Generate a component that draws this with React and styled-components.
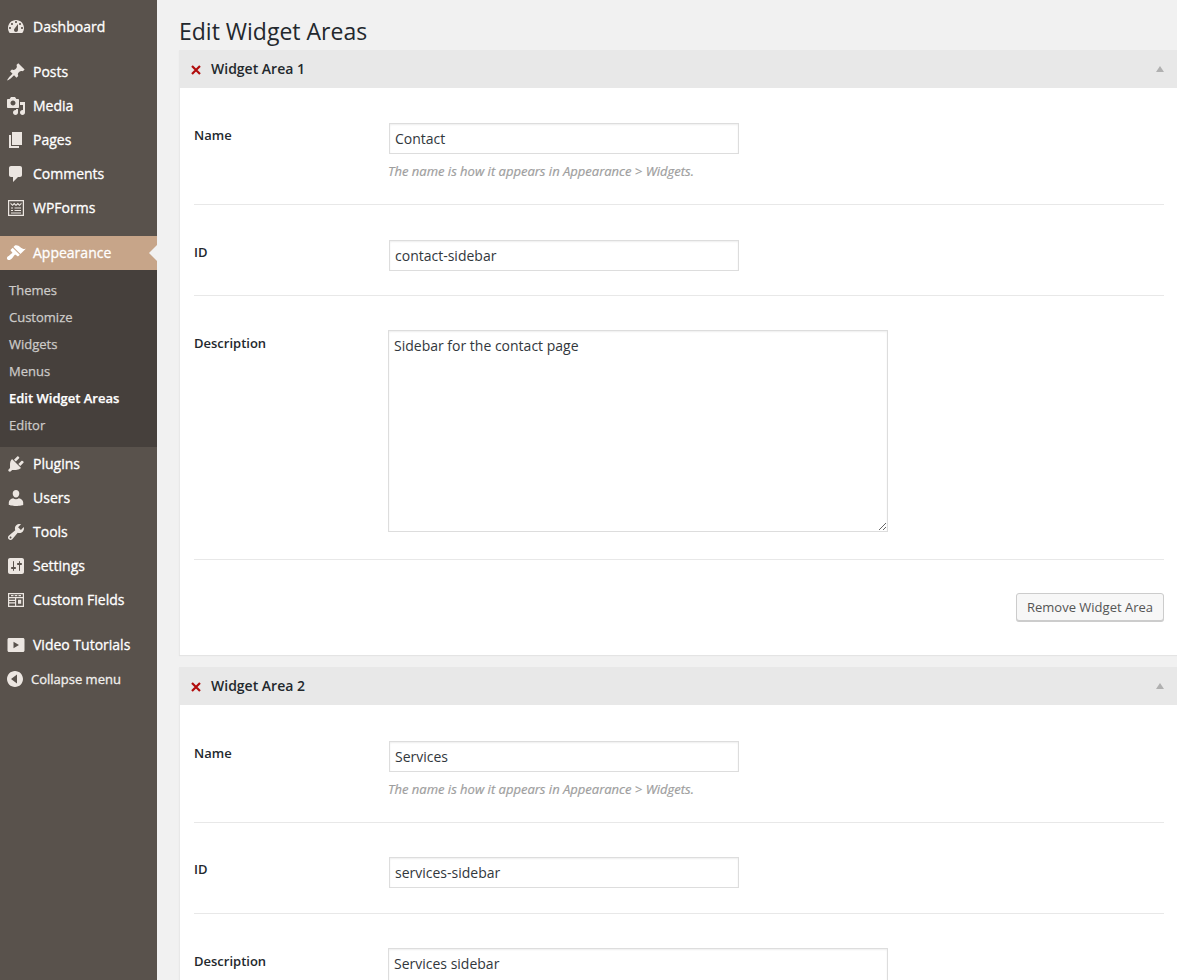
import React from 'react';
import styled, { createGlobalStyle } from 'styled-components';

const paths = {
    dashboard: 'M3.76 16h12.48c1.1-1.37 1.76-3.11 1.76-5 0-4.42-3.58-8-8-8s-8 3.58-8 8c0 1.89.66 3.63 1.76 5zM10 4c.55 0 1 .45 1 1s-.45 1-1 1-1-.45-1-1 .45-1 1-1zM6 6c.55 0 1 .45 1 1s-.45 1-1 1-1-.45-1-1 .45-1 1-1zm8 0c.55 0 1 .45 1 1s-.45 1-1 1-1-.45-1-1 .45-1 1-1zm-5.37 5.55L12 7v6c0 1.1-.9 2-2 2s-2-.9-2-2c0-.57.24-1.08.63-1.45zM4 10c.55 0 1 .45 1 1s-.45 1-1 1-1-.45-1-1 .45-1 1-1zm12 0c.55 0 1 .45 1 1s-.45 1-1 1-1-.45-1-1 .45-1 1-1z',
    posts: 'M10.44 3.02l1.82-1.82 6.36 6.35-1.83 1.82c-1.05-.68-2.48-.57-3.41.36l-.75.75c-.92.93-1.04 2.35-.35 3.41l-1.83 1.82-2.41-2.41-2.8 2.79c-.42.42-3.38 2.71-3.8 2.29s1.86-3.39 2.28-3.81l2.79-2.79L4.1 9.36l1.83-1.82c1.05.69 2.48.57 3.4-.36l.75-.75c.93-.92 1.05-2.35.36-3.41z',
    media: 'M13 11V4c0-.55-.45-1-1-1h-1.67L9 1H5L3.67 3H2c-.55 0-1 .45-1 1v7c0 .55.45 1 1 1h10c.55 0 1-.45 1-1zM7 4.5c1.38 0 2.5 1.12 2.5 2.5S8.38 9.5 7 9.5 4.5 8.38 4.5 7 5.62 4.5 7 4.5zM14 6h5v10.5c0 1.38-1.12 2.5-2.5 2.5S14 17.88 14 16.5s1.12-2.5 2.5-2.5c.17 0 .34.02.5.05V9h-3V6zm-4 8.05V13h2v3.5c0 1.38-1.12 2.5-2.5 2.5S7 17.88 7 16.5 8.12 14 9.5 14c.17 0 .34.02.5.05z',
    pages: 'M6 15V2h10v13H6zm-1 1h8v2H3V5h2v11z',
    comments: 'M5 2h9c1.1 0 2 .9 2 2v7c0 1.1-.9 2-2 2h-2l-5 5v-5H5c-1.1 0-2-.9-2-2V4c0-1.1.9-2 2-2z',
    wpforms: 'M2 2h16v16H2V2zm1.2 1.2v13.6h13.6V3.2H3.2zM4.5 4.5l2 2 1.7-1.7L10 6.5l1.8-1.7 1.7 1.7 2-2v1.6l-2 2-1.7-1.7L10 8.1 8.2 6.4 6.5 8.1l-2-2V4.500zM5 9.500h2v1.100H5V9.500zm3.500 0H15v1.100H8.500V9.500zM5 12h2v1.100H5V12zm3.500 0H15v1.100H8.500V12zM5 14.500h10v1H5v-1z',
    appearance: 'M14.48 11.06L7.41 3.99l1.5-1.5c.5-.56 2.3-.47 3.51.32 1.21.8 1.43 1.28 2.91 2.1 1.18.64 2.45 1.26 4.45.85zm-.71.71L6.7 4.7 4.93 6.47c-.39.39-.39 1.02 0 1.41l1.06 1.06c.39.39.39 1.03 0 1.42-.6.6-1.43 1.11-2.21 1.69-.35.26-.7.53-1.01.84C1.43 13.23.12 15.1 1.5 16.5c1.39 1.39 3.27.09 4.61-1.27.31-.31.58-.66.84-1.01.58-.78 1.09-1.61 1.69-2.21.39-.39 1.02-.39 1.41 0l1.06 1.06c.39.39 1.02.39 1.41 0z',
    plugins: 'M13.11 4.36L9.87 7.6 8 5.73l3.24-3.24c.35-.34 1.05-.2 1.56.32.52.51.66 1.21.31 1.55zm-8 1.77l.91-1.12 9.01 9.01-1.19.84c-.71.71-2.63 1.16-3.82 1.16H6.14L4.9 17.26c-.59.59-1.54.59-2.12 0-.59-.58-.59-1.53 0-2.12l1.24-1.24v-3.88c0-1.13.4-3.19 1.09-3.89zm7.26 3.97l3.24-3.24c.34-.35 1.04-.21 1.55.31.52.51.66 1.21.31 1.55l-3.24 3.25z',
    users: 'M10 9.6c-2 0-3.300-2.200-3.300-4.100C6.700 3.500 8.100 2 10 2s3.300 1.500 3.300 3.500c0 1.900-1.300 4.100-3.300 4.100zM7.200 10.200c.7.700 1.700 1.100 2.800 1.100s2.100-.4 2.800-1.100c2.400.2 4.400 2.100 4.400 4.300v2.500s-3.400 1-7.200 1-7.200-1-7.200-1v-2.500c0-2.200 2-4.100 4.400-4.300z',
    tools: 'M16.68 9.77c-1.34 1.34-3.3 1.67-4.95.99l-5.41 6.52c-.99.99-2.59.99-3.58 0s-.99-2.59 0-3.57l6.52-5.42c-.68-1.65-.35-3.61.99-4.95 1.28-1.28 3.12-1.62 4.72-1.06l-2.89 2.89 2.82 2.82 2.86-2.87c.53 1.58.18 3.39-1.08 4.65zM3.81 16.21c.4.39 1.04.39 1.43 0 .4-.4.4-1.04 0-1.43-.39-.4-1.03-.4-1.43 0-.39.39-.39 1.03 0 1.43z',
    settings: 'M18 16V4c0-1.1-.9-2-2-2H4c-1.1 0-2 .9-2 2v12c0 1.1.9 2 2 2h12c1.1 0 2-.9 2-2zM8 11h1c.55 0 1 .45 1 1s-.45 1-1 1H8v1.5c0 .28-.22.5-.5.5s-.5-.22-.5-.5V13H6c-.55 0-1-.45-1-1s.45-1 1-1h1V5.500c0-.28.22-.5.5-.5s.5.22.5.5V11zm5-2h-1c-.55 0-1-.45-1-1s.45-1 1-1h1V5.500c0-.28.22-.5.5-.5s.5.22.5.5V7h1c.55 0 1 .45 1 1s-.45 1-1 1h-1v5.500c0 .28-.22.5-.5.5s-.5-.22-.5-.5V9z',
    fields: 'M2 3h16v14H2V3zm1.200 1.200V7h13.600V4.200H3.200zM5 5h2.500v1.200H5V5zm3.700 0h2.600v1.200H8.700V5zm3.800 0H15v1.200h-2.500V5zM3.200 8.200v1.500H9V8.200H3.200zm7 0v7.600h6.600V8.200h-6.600zM3.200 10.900v1.400H9v-1.400H3.200zm0 2.600v2.300H9v-2.300H3.200zm8.800-3.800h3.200v4.100H12V9.700z',
    video: 'M3 3h14c.8 0 1.500.7 1.500 1.500v11c0 .8-.7 1.500-1.500 1.500H3c-.8 0-1.500-.7-1.500-1.500v-11C1.500 3.700 2.200 3 3 3zm4.500 3.800v6.400l5.500-3.200-5.500-3.200z',
    collapse: 'M10 2c4.420 0 8 3.580 8 8s-3.580 8-8 8-8-3.580-8-8 3.580-8 8-8zm2 3.500L6 10l6 4.500v-9z',
};

const menuGroups = [
    [{ icon: 'dashboard', label: 'Dashboard' }],
    [
        { icon: 'posts', label: 'Posts' },
        { icon: 'media', label: 'Media' },
        { icon: 'pages', label: 'Pages' },
        { icon: 'comments', label: 'Comments' },
        { icon: 'wpforms', label: 'WPForms' },
    ],
];

const lowerMenu = [
    { icon: 'plugins', label: 'Plugins' },
    { icon: 'users', label: 'Users' },
    { icon: 'tools', label: 'Tools' },
    { icon: 'settings', label: 'Settings' },
    { icon: 'fields', label: 'Custom Fields' },
];

const subMenu = ['Themes', 'Customize', 'Widgets', 'Menus', 'Edit Widget Areas', 'Editor'];

const Icon = ({ name }) => (
    <MenuIcon viewBox="0 0 20 20" aria-hidden="true">
        <path d={paths[name]} fillRule="evenodd" />
    </MenuIcon>
);

const MenuLink = ({ icon, label }) => (
    <MenuItem>
        <Icon name={icon} />
        <span>{label}</span>
    </MenuItem>
);

// spacing = [top, bottom] padding of the name, id and description rows
const WidgetArea = ({ title, name, id, description, spacing, showFooter }) => (
    <Card>
        <CardHeader>
            <RemoveMark viewBox="0 0 12 12" aria-hidden="true">
                <path d="M2 2l8 8M10 2l-8 8" />
            </RemoveMark>
            <CardTitle>{title}</CardTitle>
            <Toggle />
        </CardHeader>
        <CardBody>
            <FieldRow $top={spacing[0][0]} $bottom={spacing[0][1]}>
                <FieldLabel>Name</FieldLabel>
                <div>
                    <TextInput defaultValue={name} />
                    <Hint>The name is how it appears in Appearance &gt; Widgets.</Hint>
                </div>
            </FieldRow>
            <FieldRow $top={spacing[1][0]} $bottom={spacing[1][1]}>
                <FieldLabel>ID</FieldLabel>
                <TextInput defaultValue={id} />
            </FieldRow>
            <FieldRow $top={spacing[2][0]} $bottom={spacing[2][1]}>
                <FieldLabel $textarea>Description</FieldLabel>
                <TextArea defaultValue={description} />
            </FieldRow>
            {showFooter && (
                <CardFooter>
                    <RemoveButton type="button">Remove Widget Area</RemoveButton>
                </CardFooter>
            )}
        </CardBody>
    </Card>
);

export default function App() {
    return (
        <>
            <GlobalStyle />
            <Page>
                <Sidebar>
                    {menuGroups.map((group, i) => (
                        <MenuGroup key={i}>
                            {group.map((item) => (
                                <MenuLink key={item.label} {...item} />
                            ))}
                        </MenuGroup>
                    ))}
                    <ActiveItem>
                        <Icon name="appearance" />
                        <span>Appearance</span>
                    </ActiveItem>
                    <SubMenu>
                        {subMenu.map((label) => (
                            <SubItem key={label} $current={label === 'Edit Widget Areas'}>
                                {label}
                            </SubItem>
                        ))}
                    </SubMenu>
                    <MenuGroup>
                        {lowerMenu.map((item) => (
                            <MenuLink key={item.label} {...item} />
                        ))}
                    </MenuGroup>
                    <MenuLink icon="video" label="Video Tutorials" />
                    <CollapseItem>
                        <Icon name="collapse" />
                        <span>Collapse menu</span>
                    </CollapseItem>
                </Sidebar>
                <Content>
                    <PageTitle>Edit Widget Areas</PageTitle>
                    <WidgetArea
                        title="Widget Area 1"
                        name="Contact"
                        id="contact-sidebar"
                        description="Sidebar for the contact page"
                        spacing={[[35, 25], [35, 24], [34, 27]]}
                        showFooter
                    />
                    <WidgetArea
                        title="Widget Area 2"
                        name="Services"
                        id="services-sidebar"
                        description="Services sidebar"
                        spacing={[[36, 25], [34, 25], [34, 27]]}
                    />
                </Content>
            </Page>
        </>
    );
}

/* ========= CSS STYLED COMPONENTS ========= */

const GlobalStyle = createGlobalStyle`
    * {
        box-sizing: border-box;
    }

    html, body {
        margin: 0;
        background: #f1f1f1;
        color: #23282d;
        font-family: "Open Sans", "Liberation Sans", sans-serif;
    }
`;

const Page = styled.div`
    display: flex;
    height: 980px;
    overflow: hidden;
`;

const Sidebar = styled.nav`
    flex: 0 0 157px;
    padding-top: 10px;
    background: #59524c;
    color: #fff;
`;

const MenuGroup = styled.div`
    margin-bottom: 11px;
`;

const MenuItem = styled.div`
    display: flex;
    align-items: center;
    height: 34px;
    padding: 0 0 2px 33px;
    position: relative;
    font-size: 14px;
    -webkit-text-stroke: 0.3px currentColor;
`;

const MenuIcon = styled.svg`
    position: absolute;
    left: 6px;
    top: 7px;
    width: 20px;
    height: 20px;
    fill: #ece6e1;
`;

const ActiveItem = styled(MenuItem)`
    background: #c7a589;

    &::after {
        content: '';
        position: absolute;
        right: 0;
        top: 9px;
        border: 8px solid transparent;
        border-left-width: 0;
        border-right-color: #f1f1f1;
    }

    ${MenuIcon} {
        fill: #fff;
    }
`;

const SubMenu = styled.div`
    padding: 7px 0 8px;
    background: #46403c;
`;

const SubItem = styled.div`
    display: flex;
    align-items: center;
    height: 27px;
    padding: 0 0 2px 9px;
    font-size: 13px;
    font-weight: ${(p) => (p.$current ? 600 : 400)};
    -webkit-text-stroke: 0.25px currentColor;
    color: ${(p) => (p.$current ? '#fff' : '#cdcbc9')};
`;

const CollapseItem = styled(MenuItem)`
    padding: 0 0 0 31px;
    font-size: 13px;
    color: #f1efed;

    ${MenuIcon} {
        left: 5px;
    }
`;

const Content = styled.main`
    flex: 1;
    min-width: 0;
    padding-left: 22px;
`;

const PageTitle = styled.h1`
    margin: 0;
    height: 50px;
    padding-top: 14px;
    font-size: 23px;
    line-height: 34px;
    font-weight: 400;
    color: #23282d;
`;

const Card = styled.section`
    margin-bottom: 12px;
    background: #fff;
    box-shadow: 0 1px 1px rgba(0, 0, 0, 0.05);
`;

const CardHeader = styled.header`
    display: flex;
    align-items: center;
    height: 38px;
    padding: 0 13px 0 11px;
    background: #e8e8e8;
`;

const RemoveMark = styled.svg`
    width: 12px;
    height: 12px;
    margin-top: 2px;
    margin-right: 9px;
    fill: none;
    stroke: #b10c0c;
    stroke-width: 2.2;
`;

const CardTitle = styled.h2`
    flex: 1;
    margin: 0 0 2px;
    font-size: 14px;
    font-weight: 600;
    color: #23282d;
`;

const Toggle = styled.span`
    width: 0;
    height: 0;
    border-style: solid;
    border-width: 0 4px 6px;
    border-color: transparent transparent #b0b0b0;
`;

const CardBody = styled.div`
    padding: 0 13px 0 14px;
    border-left: 1px solid #e8e8e8;
`;

const FieldRow = styled.div`
    display: grid;
    grid-template-columns: 194px 1fr;
    padding: ${(p) => p.$top}px 0 ${(p) => p.$bottom}px;
    border-bottom: 1px solid #e8e8e8;
`;

const FieldLabel = styled.label`
    padding-top: ${(p) => (p.$textarea ? '5px' : '4px')};
    font-size: 13px;
    line-height: 16px;
    font-weight: 600;
    color: #23282d;
`;

const TextInput = styled.input`
    display: block;
    width: 350px;
    height: 31px;
    margin-left: 1px;
    padding: 0 5px;
    border: 1px solid #ddd;
    border-radius: 0;
    outline: none;
    background: #fff;
    font-family: inherit;
    font-size: 14px;
    color: #32373c;
    box-shadow: inset 0 1px 2px rgba(0, 0, 0, 0.07);
`;

const Hint = styled.p`
    margin: 9px 0 0;
    font-size: 13px;
    line-height: 16px;
    font-style: italic;
    color: #9e9e9e;
    -webkit-text-stroke: 0.2px currentColor;
`;

const TextArea = styled.textarea`
    display: block;
    width: 500px;
    height: 202px;
    padding: 6px 5px;
    border: 1px solid #ddd;
    outline: none;
    background: #fff;
    font-family: inherit;
    font-size: 14px;
    line-height: 18px;
    color: #32373c;
    box-shadow: inset 0 1px 2px rgba(0, 0, 0, 0.07);
`;

const CardFooter = styled.div`
    display: flex;
    justify-content: flex-end;
    padding: 33px 0 34px;
`;

const RemoveButton = styled.button`
    height: 28px;
    padding: 0 10px;
    border: 1px solid #ccc;
    border-radius: 3px;
    background: #f7f7f7;
    box-shadow: 0 1px 0 #ccc;
    font-family: inherit;
    font-size: 13px;
    color: #555;
`;
